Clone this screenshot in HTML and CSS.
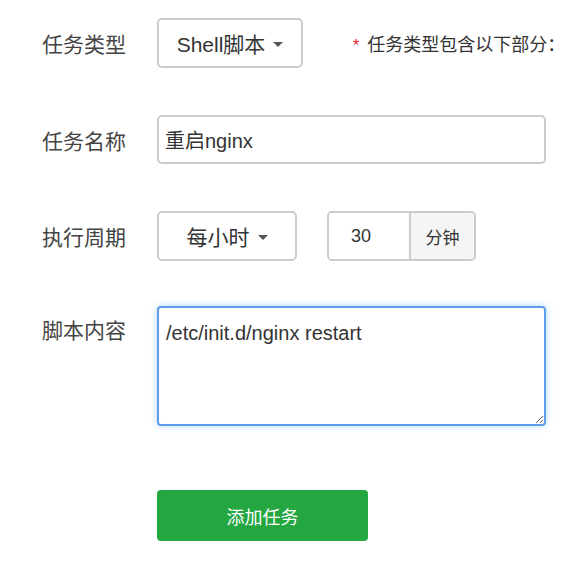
FILE: index.html
```html
<!DOCTYPE html>
<html lang="zh-CN">
<head>
    <meta charset="UTF-8">
    <meta name="viewport" content="width=device-width, initial-scale=1.0">
    <title>添加任务</title>
    <link rel="stylesheet" href="styles.css">
</head>
<body>
    <form class="task-form">
        <div class="form-row row-type">
            <label class="form-label">任务类型</label>
            <div class="select-box select-type">
                <span>Shell脚本</span>
                <span class="caret"></span>
            </div>
            <div class="form-hint"><span class="required">*</span>任务类型包含以下部分：</div>
        </div>

        <div class="form-row row-name">
            <label class="form-label">任务名称</label>
            <input type="text" class="text-input" value="重启nginx">
        </div>

        <div class="form-row row-cycle">
            <label class="form-label">执行周期</label>
            <div class="select-box select-cycle">
                <span>每小时</span>
                <span class="caret"></span>
            </div>
            <div class="input-group">
                <input type="text" class="group-input" value="30">
                <span class="group-addon">分钟</span>
            </div>
        </div>

        <div class="form-row row-script">
            <label class="form-label">脚本内容</label>
            <textarea class="script-input" spellcheck="false">/etc/init.d/nginx restart</textarea>
        </div>

        <div class="form-row row-submit">
            <button type="button" class="btn-submit">添加任务</button>
        </div>
    </form>
</body>
</html>
```

FILE: styles.css
```css
body, html {
    margin: 0;
    padding: 0;
    background: #fff;
    color: #333;
    font-family: "Liberation Sans", "Noto Sans CJK SC", sans-serif;
}

.task-form {
    padding: 18px 0 0 42px;
}

.form-row {
    display: flex;
    align-items: center;
}

.form-label {
    width: 115px;
    flex-shrink: 0;
    font-size: 21px;
    color: #444;
}

.row-type { height: 50px; margin-bottom: 47px; }
.row-name { height: 49px; margin-bottom: 47px; }
.row-cycle { height: 50px; margin-bottom: 45px; }
.row-script { align-items: flex-start; margin-bottom: 64px; }
.row-submit { padding-left: 115px; }

.row-script .form-label {
    line-height: 50px;
}

.select-box {
    box-sizing: border-box;
    height: 100%;
    display: flex;
    align-items: center;
    justify-content: center;
    gap: 8px;
    border: 2px solid #ccc;
    border-radius: 5px;
    font-size: 21px;
    color: #333;
}

.select-type { width: 146px; }
.select-cycle { width: 140px; }

.caret {
    width: 0;
    height: 0;
    border-left: 5px solid transparent;
    border-right: 5px solid transparent;
    border-top: 5px solid #555;
    margin-top: 2px;
}

.form-hint {
    margin-left: 50px;
    font-size: 18px;
    color: #333;
}

.required {
    color: #e02020;
    margin-right: 8px;
    font-size: 16px;
}

.text-input {
    box-sizing: border-box;
    width: 389px;
    height: 49px;
    border: 2px solid #ccc;
    border-radius: 5px;
    padding: 0 6px;
    font-family: inherit;
    font-size: 20px;
    color: #333;
    outline: none;
}

.input-group {
    box-sizing: border-box;
    display: flex;
    height: 100%;
    margin-left: 30px;
    border: 2px solid #ccc;
    border-radius: 5px;
    overflow: hidden;
}

.group-input {
    box-sizing: border-box;
    width: 80px;
    border: none;
    padding: 0 0 0 22px;
    font-family: inherit;
    font-size: 18px;
    color: #333;
    outline: none;
}

.group-addon {
    width: 63px;
    display: flex;
    align-items: center;
    justify-content: center;
    background: #f5f5f5;
    border-left: 2px solid #ccc;
    font-size: 17px;
    color: #333;
}

.script-input {
    box-sizing: border-box;
    width: 389px;
    height: 120px;
    margin: 0;
    border: 2px solid #5d9eea;
    border-radius: 4px;
    padding: 14px 7px;
    box-shadow: 0 0 6px rgba(102, 175, 233, 0.5);
    font-family: inherit;
    font-size: 20px;
    color: #333;
    outline: none;
}

.btn-submit {
    width: 211px;
    height: 51px;
    border: none;
    border-radius: 4px;
    background: #24a641;
    color: #fff;
    font-family: inherit;
    font-size: 18px;
    cursor: pointer;
}
```
